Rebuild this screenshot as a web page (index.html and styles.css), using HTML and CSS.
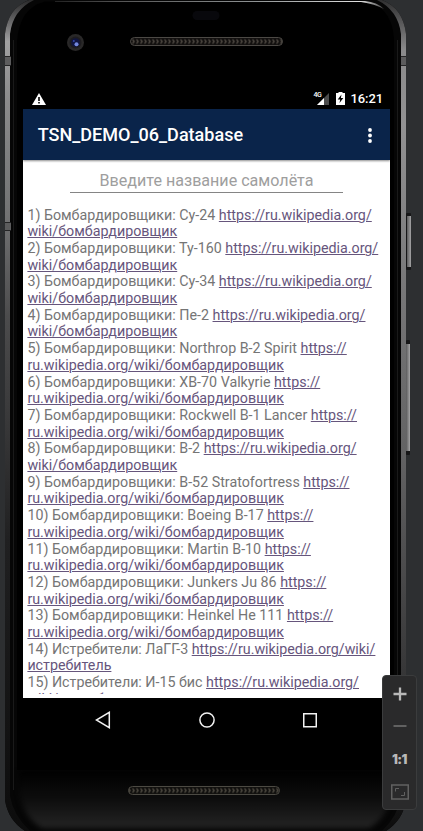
FILE: index.html
```html
<!DOCTYPE html>
<html lang="ru">
<head>
<meta charset="utf-8">
<title>TSN_DEMO_06_Database</title>
<link rel="stylesheet" href="styles.css">
</head>
<body>
<div class="emulator">
  <svg class="frame" width="423" height="831" viewBox="0 0 423 831" aria-hidden="true">
    <defs>
      <linearGradient id="metal" x1="0" y1="0" x2="0" y2="1">
        <stop offset="0" stop-color="#2a2a2b"/><stop offset=".05" stop-color="#a0a0a1"/><stop offset=".12" stop-color="#8b8b8c"/>
        <stop offset=".26" stop-color="#727273"/><stop offset=".38" stop-color="#4c4c4d"/>
        <stop offset=".52" stop-color="#363637"/><stop offset=".65" stop-color="#202021"/><stop offset="1" stop-color="#0c0c0c"/>
      </linearGradient>
      <linearGradient id="metalRight" x1="0" y1="0" x2="0" y2="1">
        <stop offset="0" stop-color="#303031"/><stop offset=".06" stop-color="#8a8a8b"/><stop offset=".15" stop-color="#929293"/>
        <stop offset=".35" stop-color="#777778"/><stop offset=".55" stop-color="#626263"/>
        <stop offset=".72" stop-color="#454546"/><stop offset=".85" stop-color="#303031"/><stop offset="1" stop-color="#0c0c0c"/>
      </linearGradient>
      <linearGradient id="topEdge" x1="0" y1="0" x2="1" y2="0">
        <stop offset="0" stop-color="#222"/><stop offset=".2" stop-color="#555"/>
        <stop offset=".6" stop-color="#8d9192"/><stop offset=".93" stop-color="#e0e0e0"/><stop offset="1" stop-color="#444"/>
      </linearGradient>
      <linearGradient id="chin" gradientUnits="userSpaceOnUse" x1="0" y1="770" x2="0" y2="828">
        <stop offset="0" stop-color="#000"/><stop offset=".5" stop-color="#0d0d0d"/><stop offset="1" stop-color="#242424"/>
      </linearGradient>
      <linearGradient id="button" x1="0" y1="0" x2="1" y2="0">
        <stop offset="0" stop-color="#5b5b5c"/><stop offset=".6" stop-color="#868687"/><stop offset="1" stop-color="#a5a5a6"/>
      </linearGradient>
      <pattern id="mesh" width="4" height="8" patternUnits="userSpaceOnUse" y="37.5">
        <path d="M.5 2l1.700 2-1.700 2" fill="none" stroke="#4a453f" stroke-width="1.300"/>
      </pattern>
      <pattern id="meshLow" width="4" height="8" patternUnits="userSpaceOnUse" y="786.5">
        <path d="M.5 2l1.700 2-1.700 2" fill="none" stroke="#4a463e" stroke-width="1.300"/>
      </pattern>
      <filter id="soft" x="-5%" y="-5%" width="110%" height="115%" color-interpolation-filters="sRGB"><feGaussianBlur stdDeviation="2.500"/></filter>
    </defs>
    <rect x="406" y="213" width="5" height="57" rx="1" fill="#161617"/>
    <rect x="407" y="216" width="4" height="51" fill="url(#button)"/>
    <rect x="406" y="340" width="4" height="115" rx="1" fill="#161617"/>
    <rect x="406" y="344" width="4" height="107" fill="url(#button)"/>
    <path d="M5 34Q8 8 29 0H382Q403 8 406 34V800Q403 820 386 831H25Q8 820 5 800Z" fill="#060606"/>
    <path d="M29 0Q8 8 5 34V800Q8 820 25 831H30Q13 815 10 796V34Q13 10 34 0Z" fill="url(#metal)"/>
    <path d="M382 0Q403 8 406 34V800Q403 820 386 831H382Q398 816 401 796V34Q398 10 377 0Z" fill="url(#metalRight)"/>
    <path d="M13.500 40V790M397.500 40V790" stroke="#1a1a1a" stroke-width="1" fill="none"/>
    <path d="M19 770V790Q22 817 42 828H369Q389 817 392 790V770Z" fill="url(#chin)" filter="url(#soft)"/>
    <path d="M17 42Q19 8 45 1.500H361Q391 3 394 38V770H17Z" fill="#000"/>
    <path d="M55 1H365Q377 2 384 9Q375 4 361 2H55Z" fill="url(#topEdge)"/>
    <path d="M5 57H11V65H5ZM401 57H406V65H401ZM5 222H11V230H5Z" fill="#5c5c5d"/>
    <path d="M5 56.500H11M5 65.500H11M401 56.500H406M401 65.500H406M5 222.500H11M5 230.500H11" stroke="#242425"/>
    <rect x="192.500" y="11" width="27" height="9" rx="4.500" fill="#08080c"/>
    <circle cx="75.500" cy="42.500" r="8.500" fill="#292828"/>
    <circle cx="75.500" cy="42.500" r="6" fill="#1d1c1f"/>
    <circle cx="75.500" cy="42.500" r="4.300" fill="#101541"/>
    <circle cx="76.500" cy="44.300" r="2" fill="#7388df"/>
    <circle cx="73.800" cy="41" r="1" fill="#3548a5"/>
    <rect x="130.500" y="37.500" width="152" height="8" rx="4" fill="#12100f"/>
    <rect x="130.500" y="37.500" width="152" height="8" rx="4" fill="url(#mesh)" stroke="#4c4945"/>
    <rect x="128.500" y="786.500" width="151" height="8" rx="4" fill="#12110f"/>
    <rect x="128.500" y="786.500" width="151" height="8" rx="4" fill="url(#meshLow)" stroke="#4c4a43"/>
  </svg>

  <div class="screen">
    <header class="status">
      <svg width="14" height="12" viewBox="0 0 14 12"><path d="M7 0L14 12H0Z" fill="#fff"/><path d="M7 4V8M7 9V10.500" stroke="#000" stroke-width="1.600"/></svg>
      <div class="status-right">
        <span class="signal"><svg width="13" height="12" viewBox="0 0 13 12"><path d="M13 0V12H1Z" fill="#4c4c4c"/><path d="M8 5V12H1Z" fill="#fff"/></svg><span class="network">4G</span></span>
        <svg class="battery" width="9" height="13" viewBox="0 0 9 13"><path d="M2.500 1V0H6.500V1H9V13H0V1Z" fill="#fff"/><path d="M5.500 2.500L1.700 7.500H4.200L3.500 11L7.300 6H4.900Z" fill="#000"/></svg>
        <time>16:21</time>
      </div>
    </header>
    <div class="appbar">
      <h1>TSN_DEMO_06_Database</h1>
      <svg width="4" height="15" viewBox="0 0 4 15" fill="#fff"><circle cx="2" cy="2" r="1.900"/><circle cx="2" cy="7.500" r="1.900"/><circle cx="2" cy="13" r="1.900"/></svg>
    </div>
    <main class="content">
      <div class="search">Введите название самолёта</div>
      <div class="list">
        <p>1) Бомбардировщики: Су-24 <a>https://ru.wikipedia.org/<br>wiki/бомбардировщик</a></p>
        <p>2) Бомбардировщики: Ту-160 <a>https://ru.wikipedia.org/<br>wiki/бомбардировщик</a></p>
        <p>3) Бомбардировщики: Су-34 <a>https://ru.wikipedia.org/<br>wiki/бомбардировщик</a></p>
        <p>4) Бомбардировщики: Пе-2 <a>https://ru.wikipedia.org/<br>wiki/бомбардировщик</a></p>
        <p>5) Бомбардировщики: Northrop B-2 Spirit <a>https://<br>ru.wikipedia.org/wiki/бомбардировщик</a></p>
        <p>6) Бомбардировщики: XB-70 Valkyrie <a>https://<br>ru.wikipedia.org/wiki/бомбардировщик</a></p>
        <p>7) Бомбардировщики: Rockwell B-1 Lancer <a>https://<br>ru.wikipedia.org/wiki/бомбардировщик</a></p>
        <p>8) Бомбардировщики: B-2 <a>https://ru.wikipedia.org/<br>wiki/бомбардировщик</a></p>
        <p>9) Бомбардировщики: B-52 Stratofortress <a>https://<br>ru.wikipedia.org/wiki/бомбардировщик</a></p>
        <p>10) Бомбардировщики: Boeing B-17 <a>https://<br>ru.wikipedia.org/wiki/бомбардировщик</a></p>
        <p>11) Бомбардировщики: Martin B-10 <a>https://<br>ru.wikipedia.org/wiki/бомбардировщик</a></p>
        <p>12) Бомбардировщики: Junkers Ju 86 <a>https://<br>ru.wikipedia.org/wiki/бомбардировщик</a></p>
        <p>13) Бомбардировщики: Heinkel He 111 <a>https://<br>ru.wikipedia.org/wiki/бомбардировщик</a></p>
        <p>14) Истребители: ЛаГГ-3 <a>https://ru.wikipedia.org/wiki/<br>истребитель</a></p>
        <p>15) Истребители: И-15 бис <a>https://ru.wikipedia.org/<br>wiki/истребитель</a></p>
      </div>
    </main>
    <nav class="nav">
      <svg width="16" height="18" viewBox="0 0 16 18"><path d="M14.300 1.300V16.700L1.300 9Z"/></svg>
      <svg width="16" height="18" viewBox="0 0 16 18"><circle cx="8" cy="9" r="7.100"/></svg>
      <svg width="16" height="18" viewBox="0 0 16 18"><rect x="1.750" y="2.750" width="12.500" height="13"/></svg>
    </nav>
  </div>

  <aside class="zoom">
    <svg width="14" height="14" viewBox="0 0 14 14"><path d="M7 .5V13.500M.5 7H13.500" stroke="#b9b9b9" stroke-width="2.300"/></svg>
    <svg width="14" height="14" viewBox="0 0 14 14"><path d="M.5 7H13.500" stroke="#616161" stroke-width="2"/></svg>
    <span class="ratio">1:1</span>
    <svg width="18" height="16" viewBox="0 0 18 16" fill="none" stroke="#616161"><rect x=".75" y="1" width="16.500" height="14" stroke-width="1.500"/><path d="M4.500 7.500V4.500H8M13.500 8V11.500H10"/></svg>
  </aside>
</div>
</body>
</html>
```
FILE: styles.css
```css
* { box-sizing: border-box; }
body { margin: 0; background: #2d2f31; font-family: Roboto, "Noto Sans", sans-serif; }
svg { display: block; flex: none; }
.emulator { position: relative; width: 423px; height: 831px; overflow: hidden; }
.frame { position: absolute; inset: 0; }
.screen {
  position: relative;
  width: 367px;
  margin-left: 23px;
  padding-top: 88px;
  display: flex;
  flex-direction: column;
}
.status {
  height: 21px;
  padding: 0 7px 0 9px;
  display: flex;
  align-items: center;
  justify-content: space-between;
  color: #fff;
}
.status-right { display: flex; align-items: center; }
.status time { font-size: 13px; font-weight: 500; line-height: 20px; letter-spacing: -.1px; }
.signal { position: relative; margin-right: 7px; }
.network { position: absolute; left: -2px; top: -2px; font-size: 7px; line-height: 8px; font-weight: 500; letter-spacing: -.4px; }
.battery { margin-right: 6px; }
.appbar {
  position: relative;
  height: 51px;
  padding: 1px 18px 0 14.700px;
  display: flex;
  align-items: center;
  justify-content: space-between;
  background: #0a244a;
  color: #fff;
  box-shadow: 0 1px 2px rgba(0, 0, 0, .45);
  z-index: 1;
}
.appbar h1 { margin: 0; font-size: 18.050px; font-weight: 500; line-height: 24px; white-space: nowrap; }
.content { height: 538px; background: #fff; overflow: hidden; }
.search {
  width: 273px;
  height: 33px;
  margin: 0 auto 13.500px 47px;
  padding-top: 11px;
  border-bottom: 1px solid #858585;
  text-align: center;
  font-size: 16.100px;
  line-height: 20px;
  color: #9e9e9e;
}
.list {
  height: 487.500px;
  padding-left: 4.400px;
  overflow: hidden;
  font-size: 14.280px;
  line-height: 16.700px;
  color: #757575;
  white-space: nowrap;
}
.list p { margin: 0; }
.list a { color: #66557c; text-decoration: underline; text-decoration-thickness: 1px; }
.nav {
  height: 44px;
  display: flex;
  justify-content: space-between;
  align-items: center;
  padding: 0 72px;
}
.nav svg { fill: none; stroke: #f2f2f2; stroke-width: 1.500; }
.zoom {
  position: absolute;
  left: 382px;
  top: 675px;
  width: 35px;
  height: 135px;
  padding: 11px 0 9px;
  display: flex;
  flex-direction: column;
  align-items: center;
  justify-content: space-between;
  background: #2a2a2b;
  border: 1px solid #3b3c3d;
  border-radius: 4px;
}
.ratio { font: 900 13px/14px Inter, sans-serif; letter-spacing: -.6px; color: #b9b9b9; }
```
